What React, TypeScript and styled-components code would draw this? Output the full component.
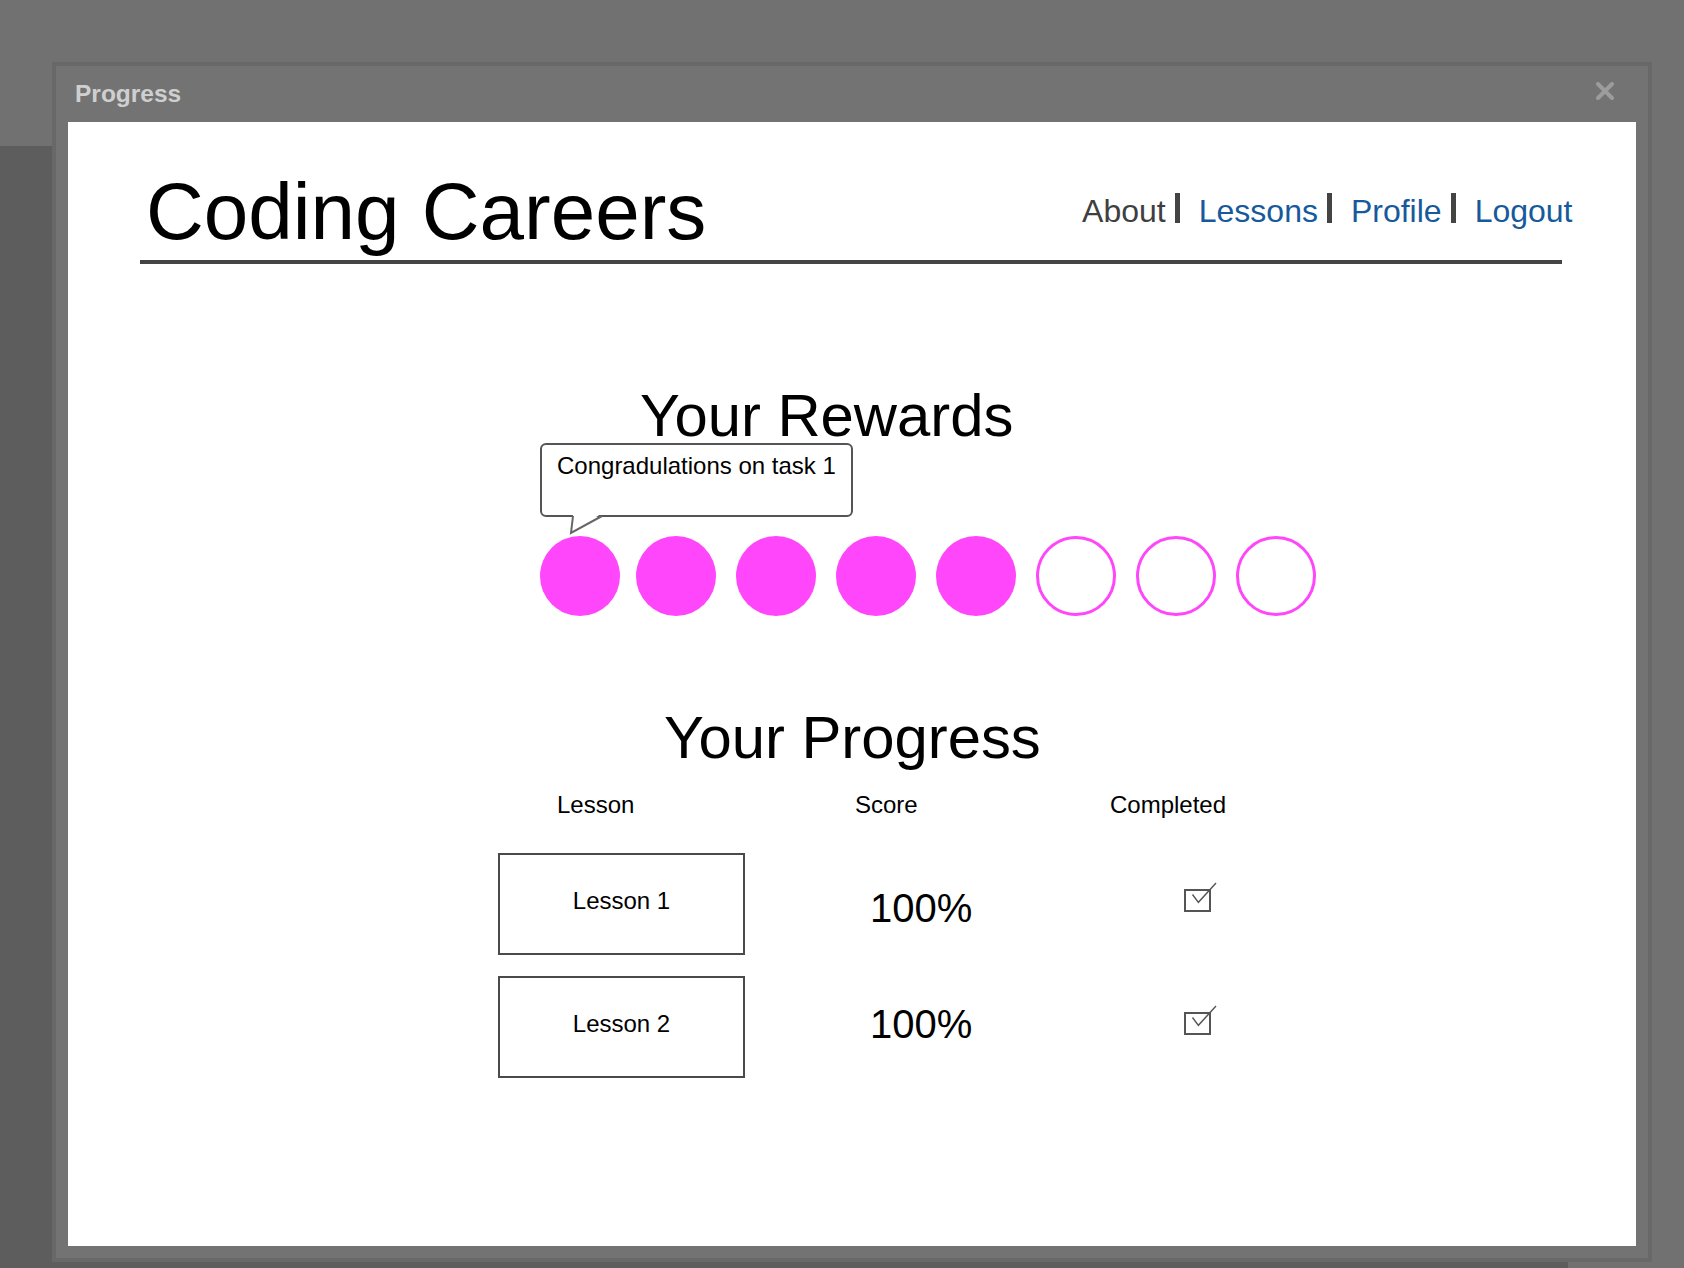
import React from "react";
import styled, { createGlobalStyle } from "styled-components";

const GlobalStyle = createGlobalStyle`
  html, body {
    margin: 0;
    padding: 0;
    width: 1684px;
    height: 1268px;
    overflow: hidden;
  }
  body {
    font-family: "Liberation Sans", Arial, Helvetica, sans-serif;
    background: #5d5d5d;
    color: #000;
  }
  * { box-sizing: border-box; }
`;

const Backdrop = styled.div`
  width: 1684px;
  height: 1268px;
  display: flex;
  flex-direction: column;
  background: #5d5d5d;
`;

const BackdropTop = styled.div`
  flex: none;
  height: 146px;
  background: #717171;
`;

const BackdropBody = styled.div`
  flex: 1;
  display: flex;
`;

const BackdropMain = styled.div`
  flex: 1;
  background: #5d5d5d;
`;

const BackdropSide = styled.div`
  width: 116px;
  background: #717171;
`;

const Dialog = styled.section`
  position: fixed;
  left: 52px;
  top: 62px;
  width: 1600px;
  height: 1200px;
  border: 4px solid #686868;
  background: #737373;
  display: flex;
  flex-direction: column;
`;

const TitleBar = styled.header`
  flex: none;
  height: 56px;
  padding: 0 34px 0 19px;
  display: flex;
  align-items: center;
  justify-content: space-between;
`;

const DialogTitle = styled.span`
  font-size: 24.5px;
  line-height: 28px;
  font-weight: 700;
  color: #cfcfcf;
`;

const CloseButton = styled.button`
  width: 18px;
  height: 18px;
  margin-top: -6px;
  padding: 0;
  border: none;
  background: transparent;
  display: flex;
  cursor: pointer;
`;

const Content = styled.main`
  flex: 1;
  margin: 0 12px 12px 12px;
  background: #ffffff;
  padding-top: 50px;
  display: flex;
  flex-direction: column;
`;

const HeaderBar = styled.div`
  margin: 0 74px 0 72px;
  padding-bottom: 8px;
  border-bottom: 4px solid #444444;
  display: flex;
  justify-content: space-between;
  align-items: flex-start;
`;

const SiteTitle = styled.h1`
  margin: 0;
  padding-left: 6px;
  font-size: 80px;
  line-height: 80px;
  font-weight: 400;
  color: #000;
`;

const Nav = styled.nav`
  display: flex;
  align-items: flex-start;
  margin-top: 23px;
  margin-right: -10.5px;
`;

const NavLink = styled.a<{ $current?: boolean }>`
  font-size: 32px;
  line-height: 32px;
  color: ${(p) => (p.$current ? "#3f3f3f" : "#165a9c")};
  text-decoration: none;
`;

const NavSeparator = styled.span`
  width: 5px;
  height: 30px;
  margin: -2px 19px 0 9px;
  background: #444444;
`;

const Section = styled.section<{ $top: number; $left: number }>`
  margin-top: ${(p) => p.$top}px;
  padding-left: ${(p) => p.$left}px;
  display: flex;
  flex-direction: column;
  align-items: flex-start;
`;

const SectionHeading = styled.h2<{ $indent: number }>`
  margin: 0 0 0 ${(p) => p.$indent}px;
  font-size: 59.8px;
  line-height: 59px;
  font-weight: 400;
  color: #000;
`;

const Bubble = styled.div`
  position: relative;
  margin-top: -2px;
  width: 313px;
  height: 74px;
  border: 2px solid #555555;
  border-radius: 6px;
  padding: 9px 0 0 15px;
  font-size: 24px;
  line-height: 24px;
  color: #000;
  background: #fff;
`;

const BubbleTail = styled.svg`
  position: absolute;
  left: 26px;
  top: 68px;
  overflow: visible;
`;

const DotRow = styled.div`
  margin-top: 19px;
  display: flex;
  gap: 20px;

  & > :first-child {
    margin-right: -4px;
  }
`;

const Dot = styled.span<{ $filled: boolean }>`
  width: 80px;
  height: 80px;
  border-radius: 50%;
  background: ${(p) => (p.$filled ? "#ff46fb" : "#ffffff")};
  border: ${(p) => (p.$filled ? "none" : "3px solid #ff46fb")};
`;

const TableRow = styled.div<{ $gap: number }>`
  margin-top: ${(p) => p.$gap}px;
  display: grid;
  grid-template-columns: 247px 365px 200px;
  align-items: center;
`;

const HeaderCell = styled.div<{ $pad: number }>`
  padding-left: ${(p) => p.$pad}px;
  font-size: 24px;
  line-height: 24.5px;
  color: #000;
`;

const LessonBox = styled.div`
  width: 247px;
  height: 102px;
  border: 2px solid #4a4a4a;
  display: flex;
  align-items: center;
  justify-content: center;
  font-size: 24px;
  line-height: 24.5px;
  padding-bottom: 4px;
  color: #000;
`;

const ScoreText = styled.div<{ $shift: number }>`
  padding-left: 125px;
  margin-top: ${(p) => p.$shift}px;
  font-size: 40px;
  line-height: 40px;
  color: #000;
`;

const CheckCell = styled.div`
  margin-left: 73px;
  margin-top: -11px;
  display: flex;
`;

const CloseIcon = () => (
  <svg width="18" height="18" viewBox="0 0 18 18">
    <path d="M2 2 L16 16 M16 2 L2 16" stroke="#9c9c9c" strokeWidth="4" strokeLinecap="round" />
  </svg>
);

const CheckIcon = () => (
  <svg width="34" height="32" viewBox="0 0 34 32">
    <rect x="2" y="8" width="25" height="21" fill="#fff" stroke="#555" strokeWidth="2" />
    <path d="M9.5 12.5 L15.4 20.3 L33 1" fill="none" stroke="#555" strokeWidth="1.4" />
  </svg>
);

const lessons = [
  { name: "Lesson 1", score: "100%", shift: 8 },
  { name: "Lesson 2", score: "100%", shift: -6 },
];

const rewards = [true, true, true, true, true, false, false, false];

export default function App() {
  return (
    <>
      <GlobalStyle />
      <Backdrop>
        <BackdropTop />
        <BackdropBody>
          <BackdropMain />
          <BackdropSide />
        </BackdropBody>
      </Backdrop>
      <Dialog>
        <TitleBar>
          <DialogTitle>Progress</DialogTitle>
          <CloseButton aria-label="Close">
            <CloseIcon />
          </CloseButton>
        </TitleBar>
        <Content>
          <HeaderBar>
            <SiteTitle>Coding Careers</SiteTitle>
            <Nav>
              <NavLink $current>About</NavLink>
              <NavSeparator />
              <NavLink href="#">Lessons</NavLink>
              <NavSeparator />
              <NavLink href="#">Profile</NavLink>
              <NavSeparator />
              <NavLink href="#">Logout</NavLink>
            </Nav>
          </HeaderBar>

          <Section $top={122} $left={472}>
            <SectionHeading $indent={100}>Your Rewards</SectionHeading>
            <Bubble>
              Congradulations on task 1
              <BubbleTail width="40" height="24" viewBox="0 0 40 24">
                <polygon points="5,1 33,1 4,19" fill="#ffffff" />
                <polyline points="5,3 3,20 34,3" fill="none" stroke="#666" strokeWidth="2" />
              </BubbleTail>
            </Bubble>
            <DotRow>
              {rewards.map((filled, i) => (
                <Dot key={i} $filled={filled} />
              ))}
            </DotRow>
          </Section>

          <Section $top={92} $left={430}>
            <SectionHeading $indent={166}>Your Progress</SectionHeading>
            <TableRow $gap={26}>
              <HeaderCell $pad={59}>Lesson</HeaderCell>
              <HeaderCell $pad={110}>Score</HeaderCell>
              <HeaderCell $pad={0}>Completed</HeaderCell>
            </TableRow>
            {lessons.map((l, i) => (
              <TableRow key={l.name} $gap={i === 0 ? 35 : 21}>
                <LessonBox>{l.name}</LessonBox>
                <ScoreText $shift={l.shift}>{l.score}</ScoreText>
                <CheckCell>
                  <CheckIcon />
                </CheckCell>
              </TableRow>
            ))}
          </Section>
        </Content>
      </Dialog>
    </>
  );
}
